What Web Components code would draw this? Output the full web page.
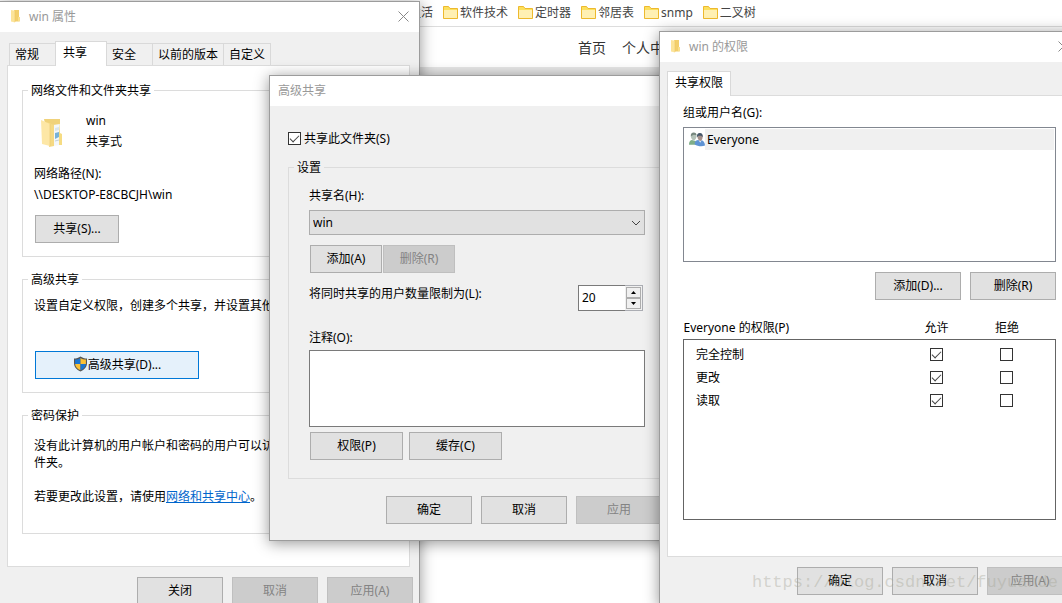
<!DOCTYPE html>
<html lang="zh-CN">
<head>
<meta charset="utf-8">
<title>win 属性</title>
<style>
    html,
    body {
        height: 100%;
        margin: 0;
    }

    body {
        overflow: hidden;
        background: #fff;
        color: #000;
        font: 12px/17px "Noto Sans", "Noto Sans CJK SC", sans-serif;
    }
</style>
</head>
<body>
<share-desktop></share-desktop>

<script>
/**
 * Desktop with a browser page and three Windows dialogs over it.
 *
 *   <win-dialog heading="..." closable>   window frame, slots: icon, footer
 *   <tab-strip tabs="a,b" selected="1">   row of property sheet tabs
 *   <group-box heading="...">             fieldset with a legend
 *   <push-button disabled primary>        standard push button
 */

function define(name, markup, setup) {
    const template = document.createElement("template");
    template.innerHTML = markup;

    customElements.define(
        name,
        class extends HTMLElement {
            constructor() {
                super();
                this.attachShadow({ mode: "open" });
                this.shadowRoot.appendChild(template.content.cloneNode(true));
            }

            connectedCallback() {
                if (setup && !this._ready) setup(this, this.shadowRoot);
                this._ready = true;
            }
        }
    );
}

const CHECKBOX_STYLES = `
    input[type="checkbox"] {
        appearance: none;
        display: grid;
        place-items: center;
        flex: none;
        box-sizing: border-box;
        width: 13px;
        height: 13px;
        margin: 0 auto;
        border: 1px solid #333;
        background: #fff;
    }

    input[type="checkbox"]:checked::after {
        content: "";
        box-sizing: border-box;
        width: 9px;
        height: 5px;
        margin-bottom: 3px;
        border: solid #444;
        border-width: 0 0 1px 1px;
        transform: rotate(-45deg);
    }
`;

/* ---------- icons ---------- */

define("small-folder-icon", `
<style>
    :host { display: block; height: 14px; }
    svg { display: block; }
</style>
<svg width="11" height="14" viewBox="0 0 11 14" aria-hidden="true">
    <path d="M4 1h5v10.500l1 1H4z" fill="#f3cf6c"/>
    <path d="M8 8h2v4H8z" fill="#f9df8e"/>
    <path d="M1 1l4 .8v11.700L1 12.500z" fill="#fce49a"/>
    <path d="M5 2v11" stroke="#ecc762" stroke-width=".6"/>
</svg>`);

define("share-folder-icon", `
<style>
    :host { display: block; }
    svg { display: block; }
</style>
<svg width="22" height="28" viewBox="0 0 22 28" aria-hidden="true">
    <path d="M3 0h16v24H8z" fill="#f0d27a"/>
    <path d="M12 6l7-1v21l-7 1z" fill="#f4f7f9"/>
    <path d="M14 9l4-1v3l-4 1z" fill="#d9e5ec"/>
    <path d="M14 14l4-1v5l-4 2z" fill="#78b2d6"/>
    <path d="M14 22l4-1" stroke="#c3d2da"/>
    <path d="M18 3l1 11 2 1v11h-3z" fill="#f6dc83"/>
    <path d="M6 3l7 3v21l-5 1z" fill="#f5d983"/>
    <path d="M0 1l9 4v22l-8-2z" fill="#fde7a6"/>
    <path d="M9 5v22" stroke="#ebcb75" stroke-width=".7"/>
</svg>`);

define("shield-icon", `
<style>
    :host { display: block; }
    svg { display: block; }
</style>
<svg width="15" height="16" viewBox="0 0 14 16" aria-hidden="true">
    <path d="M7 .5C5.200 1.800 3 2.500.5 2.600V7c0 4 2.500 6.700 6.500 8.500 4-1.800 6.500-4.500 6.500-8.500V2.600C11 2.500 8.800 1.800 7 .5z" fill="#555"/>
    <path d="M7 2C5.500 3 3.700 3.500 1.600 3.600V8H7z" fill="#1b76d2"/>
    <path d="M7 2c1.500 1 3.300 1.500 5.400 1.600V8H7z" fill="#fdc134"/>
    <path d="M1.600 8c.3 2.900 2.300 4.900 5.400 6.300V8z" fill="#fdc134"/>
    <path d="M12.400 8c-.3 2.900-2.300 4.900-5.400 6.300V8z" fill="#1b76d2"/>
</svg>`);

define("people-icon", `
<style>
    :host { display: block; }
    svg { display: block; }
</style>
<svg width="16" height="15" viewBox="0 0 17 15" aria-hidden="true">
    <path d="M0 13c0-3 1-4.500 3-5l4 1 2 4z" fill="#7fae88"/>
    <path d="M2 4c0-2 1-3.500 3-3.500S8 2 8 4 6.500 8.500 5 8.500 2 6 2 4z" fill="#b4c2b8"/>
    <path d="M2 4C1.500 1.500 3 0 5 0s3 1 3 3L5 2.500z" fill="#76877e"/>
    <path d="M6 12.500c0-3 1.500-4.500 4-4.500h3c2.500.5 4 3 4 6-3 1.300-8 1-11-1.500z" fill="#5e93d4"/>
    <path d="M10 8l2 3 1.500-3z" fill="#dce9f5"/>
    <path d="M9 4.500C9 2.500 10 1 12 1s2.500 1.500 2.500 3.500-1 4.500-2.500 4.500S9 6.500 9 4.500z" fill="#a5908a"/>
    <path d="M8.500 5C8 2 9.500.5 11.500.5S15 2 14.500 5L13 3.500H10z" fill="#45576a"/>
</svg>`);

/* ---------- browser page ---------- */

define("bookmark-link", `
<style>
    :host { display: block; }

    a {
        display: flex;
        align-items: center;
        gap: 2px;
        color: #444;
        text-decoration: none;
        white-space: nowrap;
    }

    svg { display: block; }
</style>
<a href="#">
    <svg width="15" height="13" viewBox="0 0 15 13" aria-hidden="true">
        <path d="M.5.500h5l1.500 2h7.500v10H.5z" fill="#fce05c" stroke="#edb92e"/>
        <path d="M1 4h13v8H1z" fill="#fff0b3"/>
    </svg>
    <slot></slot>
</a>`);

define("browser-page", `
<style>
    :host {
        display: flex;
        flex-direction: column;
        min-height: 100vh;
    }

    .bookmarks {
        display: flex;
        align-items: center;
        gap: 10px;
        height: 24px;
        padding: 0 0 2px 392px;
        border-bottom: 1px solid #ddd;
    }

    .site-nav {
        display: flex;
        align-items: center;
        gap: 16px;
        height: 40px;
        padding-left: 578px;
        font-size: 14px;
    }

    .site-nav a {
        color: #333;
        text-decoration: none;
        white-space: nowrap;
    }

    .banner {
        height: 240px;
        background: #e6e6e6;
    }
</style>
<nav class="bookmarks">
    <bookmark-link>生活</bookmark-link>
    <bookmark-link>软件技术</bookmark-link>
    <bookmark-link>定时器</bookmark-link>
    <bookmark-link>邻居表</bookmark-link>
    <bookmark-link>snmp</bookmark-link>
    <bookmark-link>二叉树</bookmark-link>
</nav>
<nav class="site-nav">
    <a href="#">首页</a>
    <a href="#">个人中</a>
</nav>
<div class="banner"></div>`);

/* ---------- controls ---------- */

define("push-button", `
<style>
    :host {
        display: block;
        min-width: 86px;
    }

    button {
        display: flex;
        align-items: center;
        justify-content: center;
        box-sizing: border-box;
        width: 100%;
        height: 28px;
        padding: 0 8px 2px;
        border: 1px solid #adadad;
        border-radius: 0;
        background: #e1e1e1;
        color: #000;
        font: inherit;
        white-space: nowrap;
    }

    :host([primary]) button {
        border-color: #0078d7;
        background: #e5f1fb;
    }

    button:disabled {
        border-color: #bfbfbf;
        background: #ccc;
        color: #838383;
    }
</style>
<button type="button"><slot name="icon"></slot><slot></slot></button>`, (host, root) => {
    root.querySelector("button").disabled = host.hasAttribute("disabled");
});

define("group-box", `
<style>
    :host { display: block; }

    fieldset {
        min-width: 0;
        margin: 0;
        padding: 0;
        border: 1px solid #dcdcdc;
    }

    legend {
        margin-left: 5px;
        padding: 0 3px;
    }
</style>
<fieldset>
    <legend></legend>
    <slot></slot>
</fieldset>`, (host, root) => {
    root.querySelector("legend").textContent = host.getAttribute("heading");
});

define("tab-strip", `
<style>
    :host {
        display: flex;
        align-items: flex-end;
        position: relative;
        z-index: 1;
        height: 24px;
        padding-left: 2px;
    }

    button {
        flex: none;
        box-sizing: border-box;
        min-width: 47px;
        height: 22px;
        margin-right: -1px;
        padding: 0 5px;
        border: 1px solid #d9d9d9;
        border-bottom: 0;
        background: #f0f0f0;
        color: #000;
        font: inherit;
        text-align: left;
        white-space: nowrap;
    }

    button[aria-selected="true"] {
        min-width: 52px;
        height: 25px;
        margin-bottom: -1px;
        padding: 0 7px 3px;
        background: #fff;
    }

    button[aria-selected="true"]:first-child {
        margin-left: -2px;
    }
</style>`, (host, root) => {
    host.setAttribute("role", "tablist");
    const selected = Number(host.getAttribute("selected") || 0);
    host.getAttribute("tabs").split(",").forEach((text, index) => {
        const tab = document.createElement("button");
        tab.type = "button";
        tab.setAttribute("role", "tab");
        tab.setAttribute("aria-selected", String(index === selected));
        tab.textContent = text;
        if (index === 0) root.prepend(tab);
        else root.querySelector("button:last-of-type").after(tab);
    });
});

define("check-option", `
<style>
    :host { display: flex; }

    label {
        display: flex;
        align-items: center;
        gap: 3px;
    }

    ${CHECKBOX_STYLES}
</style>
<label><input type="checkbox"><slot></slot></label>`, (host, root) => {
    root.querySelector("input").checked = host.hasAttribute("checked");
});

define("combo-field", `
<style>
    :host {
        display: flex;
        flex-direction: column;
        gap: 6px;
    }

    .box {
        display: grid;
        align-items: center;
    }

    select,
    svg {
        grid-area: 1 / 1;
    }

    select {
        appearance: none;
        box-sizing: border-box;
        width: 100%;
        height: 25px;
        padding: 0 24px 0 3px;
        border: 1px solid #adadad;
        border-radius: 0;
        background: #e1e1e1;
        color: #000;
        font: inherit;
    }

    svg {
        justify-self: end;
        margin-right: 4px;
        pointer-events: none;
    }
</style>
<label for="choice">共享名(H):</label>
<div class="box">
    <select id="choice"><option>win</option></select>
    <svg width="10" height="6" viewBox="0 0 10 6" fill="none" stroke="#444" aria-hidden="true">
        <path d="M1 1l4 4 4-4"/>
    </svg>
</div>`);

define("spin-field", `
<style>
    :host {
        display: flex;
        align-items: flex-start;
        justify-content: space-between;
    }

    .box {
        display: flex;
        box-sizing: border-box;
        width: 65px;
        height: 26px;
        border: 1px solid #abadb3;
        background: #fff;
    }

    input {
        appearance: textfield;
        box-sizing: border-box;
        flex: 1;
        min-width: 0;
        margin: -1px 0 -1px -1px;
        padding: 0 0 2px 3px;
        border: 1px solid #7a7a7a;
        border-right: 0;
        border-radius: 0;
        background: #fff;
        font: inherit;
    }

    input::-webkit-inner-spin-button {
        display: none;
    }

    .arrows {
        display: grid;
        grid-template-rows: 1fr 1fr;
        width: 15px;
        padding: 1px;
        background: #f0f0f0;
    }

    button {
        display: grid;
        place-items: center;
        padding: 0;
        border: 1px solid #adadad;
        background: #f0f0f0;
    }

    svg { display: block; }
</style>
<label for="count">将同时共享的用户数量限制为(L):</label>
<div class="box">
    <input id="count" type="number" value="20">
    <div class="arrows">
        <button type="button" aria-label="增加"><svg width="5" height="3"><path d="M0 3h5L2.500 0z"/></svg></button>
        <button type="button" aria-label="减少"><svg width="5" height="3"><path d="M0 0h5L2.500 3z"/></svg></button>
    </div>
</div>`);

define("note-field", `
<style>
    :host {
        display: flex;
        flex-direction: column;
        gap: 4px;
    }

    textarea {
        box-sizing: border-box;
        width: 100%;
        height: 77px;
        border: 1px solid #7a7a7a;
        border-radius: 0;
        background: #fff;
        font: inherit;
        resize: none;
    }
</style>
<label for="note">注释(O):</label>
<textarea id="note"></textarea>`);

define("user-list", `
<style>
    :host {
        display: flex;
        flex-direction: column;
        gap: 6px;
    }

    ul {
        box-sizing: border-box;
        height: 135px;
        margin: 0;
        padding: 1px 1px 1px 5px;
        border: 1px solid #828790;
        background: #fff;
        list-style: none;
    }

    li {
        display: flex;
        align-items: center;
    }

    li span {
        flex: 1;
        padding: 2px;
        background: #f0f0f0;
    }
</style>
<div id="caption">组或用户名(G):</div>
<ul aria-labelledby="caption">
    <li><people-icon></people-icon><span>Everyone</span></li>
</ul>`);

define("permission-table", `
<style>
    :host { display: block; }

    table {
        width: 100%;
        border-collapse: collapse;
        table-layout: fixed;
    }

    .allow { width: 70px; }
    .deny { width: 84px; }

    th,
    td {
        height: 23px;
        padding: 0;
        font-weight: normal;
        text-align: center;
    }

    thead th {
        height: 24px;
    }

    th:first-child {
        text-align: left;
    }

    tbody {
        border: 1px solid #646464;
    }

    tbody th {
        padding-left: 12px;
    }

    th:last-child,
    td:last-child {
        padding-right: 13px;
    }

    tbody tr:first-child > * {
        padding-top: 3px;
    }

    .rest td {
        height: 107px;
    }

    ${CHECKBOX_STYLES}
</style>
<table>
    <colgroup><col><col class="allow"><col class="deny"></colgroup>
    <thead>
        <tr><th scope="col">Everyone 的权限(P)</th><th scope="col">允许</th><th scope="col">拒绝</th></tr>
    </thead>
    <tbody>
        <tr class="rest"><td colspan="3"></td></tr>
    </tbody>
</table>`, (host, root) => {
    const rest = root.querySelector(".rest");
    ["完全控制", "更改", "读取"].forEach((name) => {
        const row = document.createElement("tr");
        row.innerHTML = `
            <th scope="row">${name}</th>
            <td><input type="checkbox" aria-label="允许 ${name}" checked></td>
            <td><input type="checkbox" aria-label="拒绝 ${name}"></td>`;
        rest.before(row);
    });
});

/* ---------- window frame ---------- */

define("win-dialog", `
<style>
    :host {
        display: block;
        box-sizing: border-box;
        border: 1px solid #9c9c9c;
        background: #f0f0f0;
        box-shadow: 0 2px 14px rgba(0, 0, 0, 0.42);
    }

    header {
        display: flex;
        align-items: center;
        box-sizing: border-box;
        height: 30px;
        padding: 0 10px 2px 8px;
        background: #fff;
        color: #999;
    }

    h2 {
        flex: 1;
        margin: 0;
        font: inherit;
    }

    ::slotted([slot="icon"]) {
        width: 11px;
        margin: 0 8px 0 2px;
    }

    .close {
        padding: 0;
        border: 0;
        background: none;
    }

    .close svg { display: block; }

    :host(:not([closable])) .close {
        display: none;
    }

    .body {
        padding: var(--body-padding, 9px 9px 0 7px);
    }

    footer {
        display: flex;
        justify-content: flex-end;
        gap: 9px;
        padding: var(--footer-padding, 10px 6px);
    }
</style>
<header>
    <slot name="icon"></slot>
    <h2></h2>
    <button class="close" type="button" aria-label="关闭">
        <svg width="11" height="11" viewBox="0 0 11 11" stroke="#888" aria-hidden="true">
            <path d="M.5.500l10 10M10.500.500l-10 10"/>
        </svg>
    </button>
</header>
<div class="body"><slot></slot></div>
<footer><slot name="footer"></slot></footer>`, (host, root) => {
    host.setAttribute("role", "dialog");
    root.querySelector("h2").textContent = host.getAttribute("heading");
});

/* ---------- dialog contents ---------- */

define("sharing-sheet", `
<style>
    :host { display: block; }

    .panel {
        display: flex;
        flex-direction: column;
        gap: 14px;
        padding: 16px 14px 32px;
        border: 1px solid #dcdcdc;
        background: #fff;
    }

    p { margin: 0; }

    .network,
    .advanced,
    .password {
        padding-left: 11px;
    }

    .network {
        padding-top: 11px;
        padding-bottom: 13px;
        line-height: 21px;
    }

    .share {
        display: flex;
        align-items: flex-end;
        gap: 23px;
        margin-bottom: 11px;
        padding-left: 7px;
    }

    share-folder-icon {
        padding-bottom: 5px;
    }

    .network push-button {
        width: 84px;
        min-width: 0;
        margin: 10px 0 0 1px;
    }

    .advanced {
        padding-top: 9px;
        padding-bottom: 13px;
        white-space: nowrap;
    }

    .advanced push-button {
        width: 164px;
        margin: 37px 0 0 1px;
    }

    .password {
        padding-top: 13px;
        padding-bottom: 28px;
    }

    .password p + p {
        margin-top: 17px;
    }

    a { color: #0066cc; }
</style>
<tab-strip tabs="常规,共享,安全,以前的版本,自定义" selected="1"></tab-strip>
<div class="panel">
    <group-box heading="网络文件和文件夹共享">
        <div class="network">
            <div class="share">
                <share-folder-icon></share-folder-icon>
                <div>
                    <p>win</p>
                    <p>共享式</p>
                </div>
            </div>
            <p>网络路径(N):</p>
            <p>\\\\DESKTOP-E8CBCJH\\win</p>
            <push-button>共享(S)...</push-button>
        </div>
    </group-box>
    <group-box heading="高级共享">
        <div class="advanced">
            <p>设置自定义权限，创建多个共享，并设置其他</p>
            <push-button primary><shield-icon slot="icon"></shield-icon>高级共享(D)...</push-button>
        </div>
    </group-box>
    <group-box heading="密码保护">
        <div class="password">
            <p>没有此计算机的用户帐户和密码的用户可以访<br>件夹。</p>
            <p>若要更改此设置，请使用<a href="#">网络和共享中心</a>。</p>
        </div>
    </group-box>
</div>`);

define("advanced-sharing", `
<style>
    :host {
        display: flex;
        flex-direction: column;
        gap: 12px;
    }

    .settings {
        display: flex;
        flex-direction: column;
        padding: 11px 20px 18px;
    }

    .row {
        display: flex;
        padding-left: 1px;
    }

    .names {
        gap: 1px;
        margin: 10px 0 12px;
    }

    .names push-button {
        width: 72px;
        min-width: 0;
    }

    spin-field {
        margin-right: 2px;
    }

    note-field {
        margin-top: 18px;
    }

    .actions {
        gap: 6px;
        margin-top: 5px;
    }

    .actions push-button {
        width: 93px;
    }
</style>
<check-option checked>共享此文件夹(S)</check-option>
<group-box heading="设置">
    <div class="settings">
        <combo-field></combo-field>
        <div class="row names">
            <push-button>添加(A)</push-button>
            <push-button disabled>删除(R)</push-button>
        </div>
        <spin-field></spin-field>
        <note-field></note-field>
        <div class="row actions">
            <push-button>权限(P)</push-button>
            <push-button>缓存(C)</push-button>
        </div>
    </div>
</group-box>`);

define("permission-sheet", `
<style>
    :host { display: block; }

    .panel {
        padding: 8px 13px 36px 15px;
        border: 1px solid #dcdcdc;
        background: #fff;
    }

    .row {
        display: flex;
        justify-content: flex-end;
        gap: 9px;
        margin: 10px 0 15px;
    }
</style>
<tab-strip tabs="共享权限"></tab-strip>
<div class="panel">
    <user-list></user-list>
    <div class="row">
        <push-button>添加(D)...</push-button>
        <push-button>删除(R)</push-button>
    </div>
    <permission-table></permission-table>
</div>`);

define("share-desktop", `
<style>
    :host {
        display: block;
        position: relative;
        height: 100vh;
        overflow: hidden;
    }

    win-dialog {
        position: absolute;
    }

    .properties {
        top: 1px;
        left: -1px;
        width: 421px;
    }

    .advanced {
        --body-padding: 24px 18px 0;
        --footer-padding: 17px 22px 16px;
        top: 75px;
        left: 269px;
        width: 416px;
    }

    .permissions {
        top: 31px;
        left: 659px;
        right: -18px;
    }

    .watermark {
        position: absolute;
        right: 4px;
        bottom: 8px;
        color: rgba(165, 165, 150, 0.4);
        font: 17px/24px "Liberation Mono", monospace;
        pointer-events: none;
    }
</style>
<browser-page></browser-page>
<win-dialog class="properties" heading="win 属性" closable>
    <small-folder-icon slot="icon"></small-folder-icon>
    <sharing-sheet></sharing-sheet>
    <push-button slot="footer">关闭</push-button>
    <push-button slot="footer" disabled>取消</push-button>
    <push-button slot="footer" disabled>应用(A)</push-button>
</win-dialog>
<win-dialog class="advanced" heading="高级共享">
    <advanced-sharing></advanced-sharing>
    <push-button slot="footer">确定</push-button>
    <push-button slot="footer">取消</push-button>
    <push-button slot="footer" disabled>应用</push-button>
</win-dialog>
<win-dialog class="permissions" heading="win 的权限" closable>
    <small-folder-icon slot="icon"></small-folder-icon>
    <permission-sheet></permission-sheet>
    <push-button slot="footer">确定</push-button>
    <push-button slot="footer">取消</push-button>
    <push-button slot="footer" disabled>应用(A)</push-button>
</win-dialog>
<div class="watermark">https://blog.csdn.net/fuyuande</div>`);
</script>
</body>
</html>
